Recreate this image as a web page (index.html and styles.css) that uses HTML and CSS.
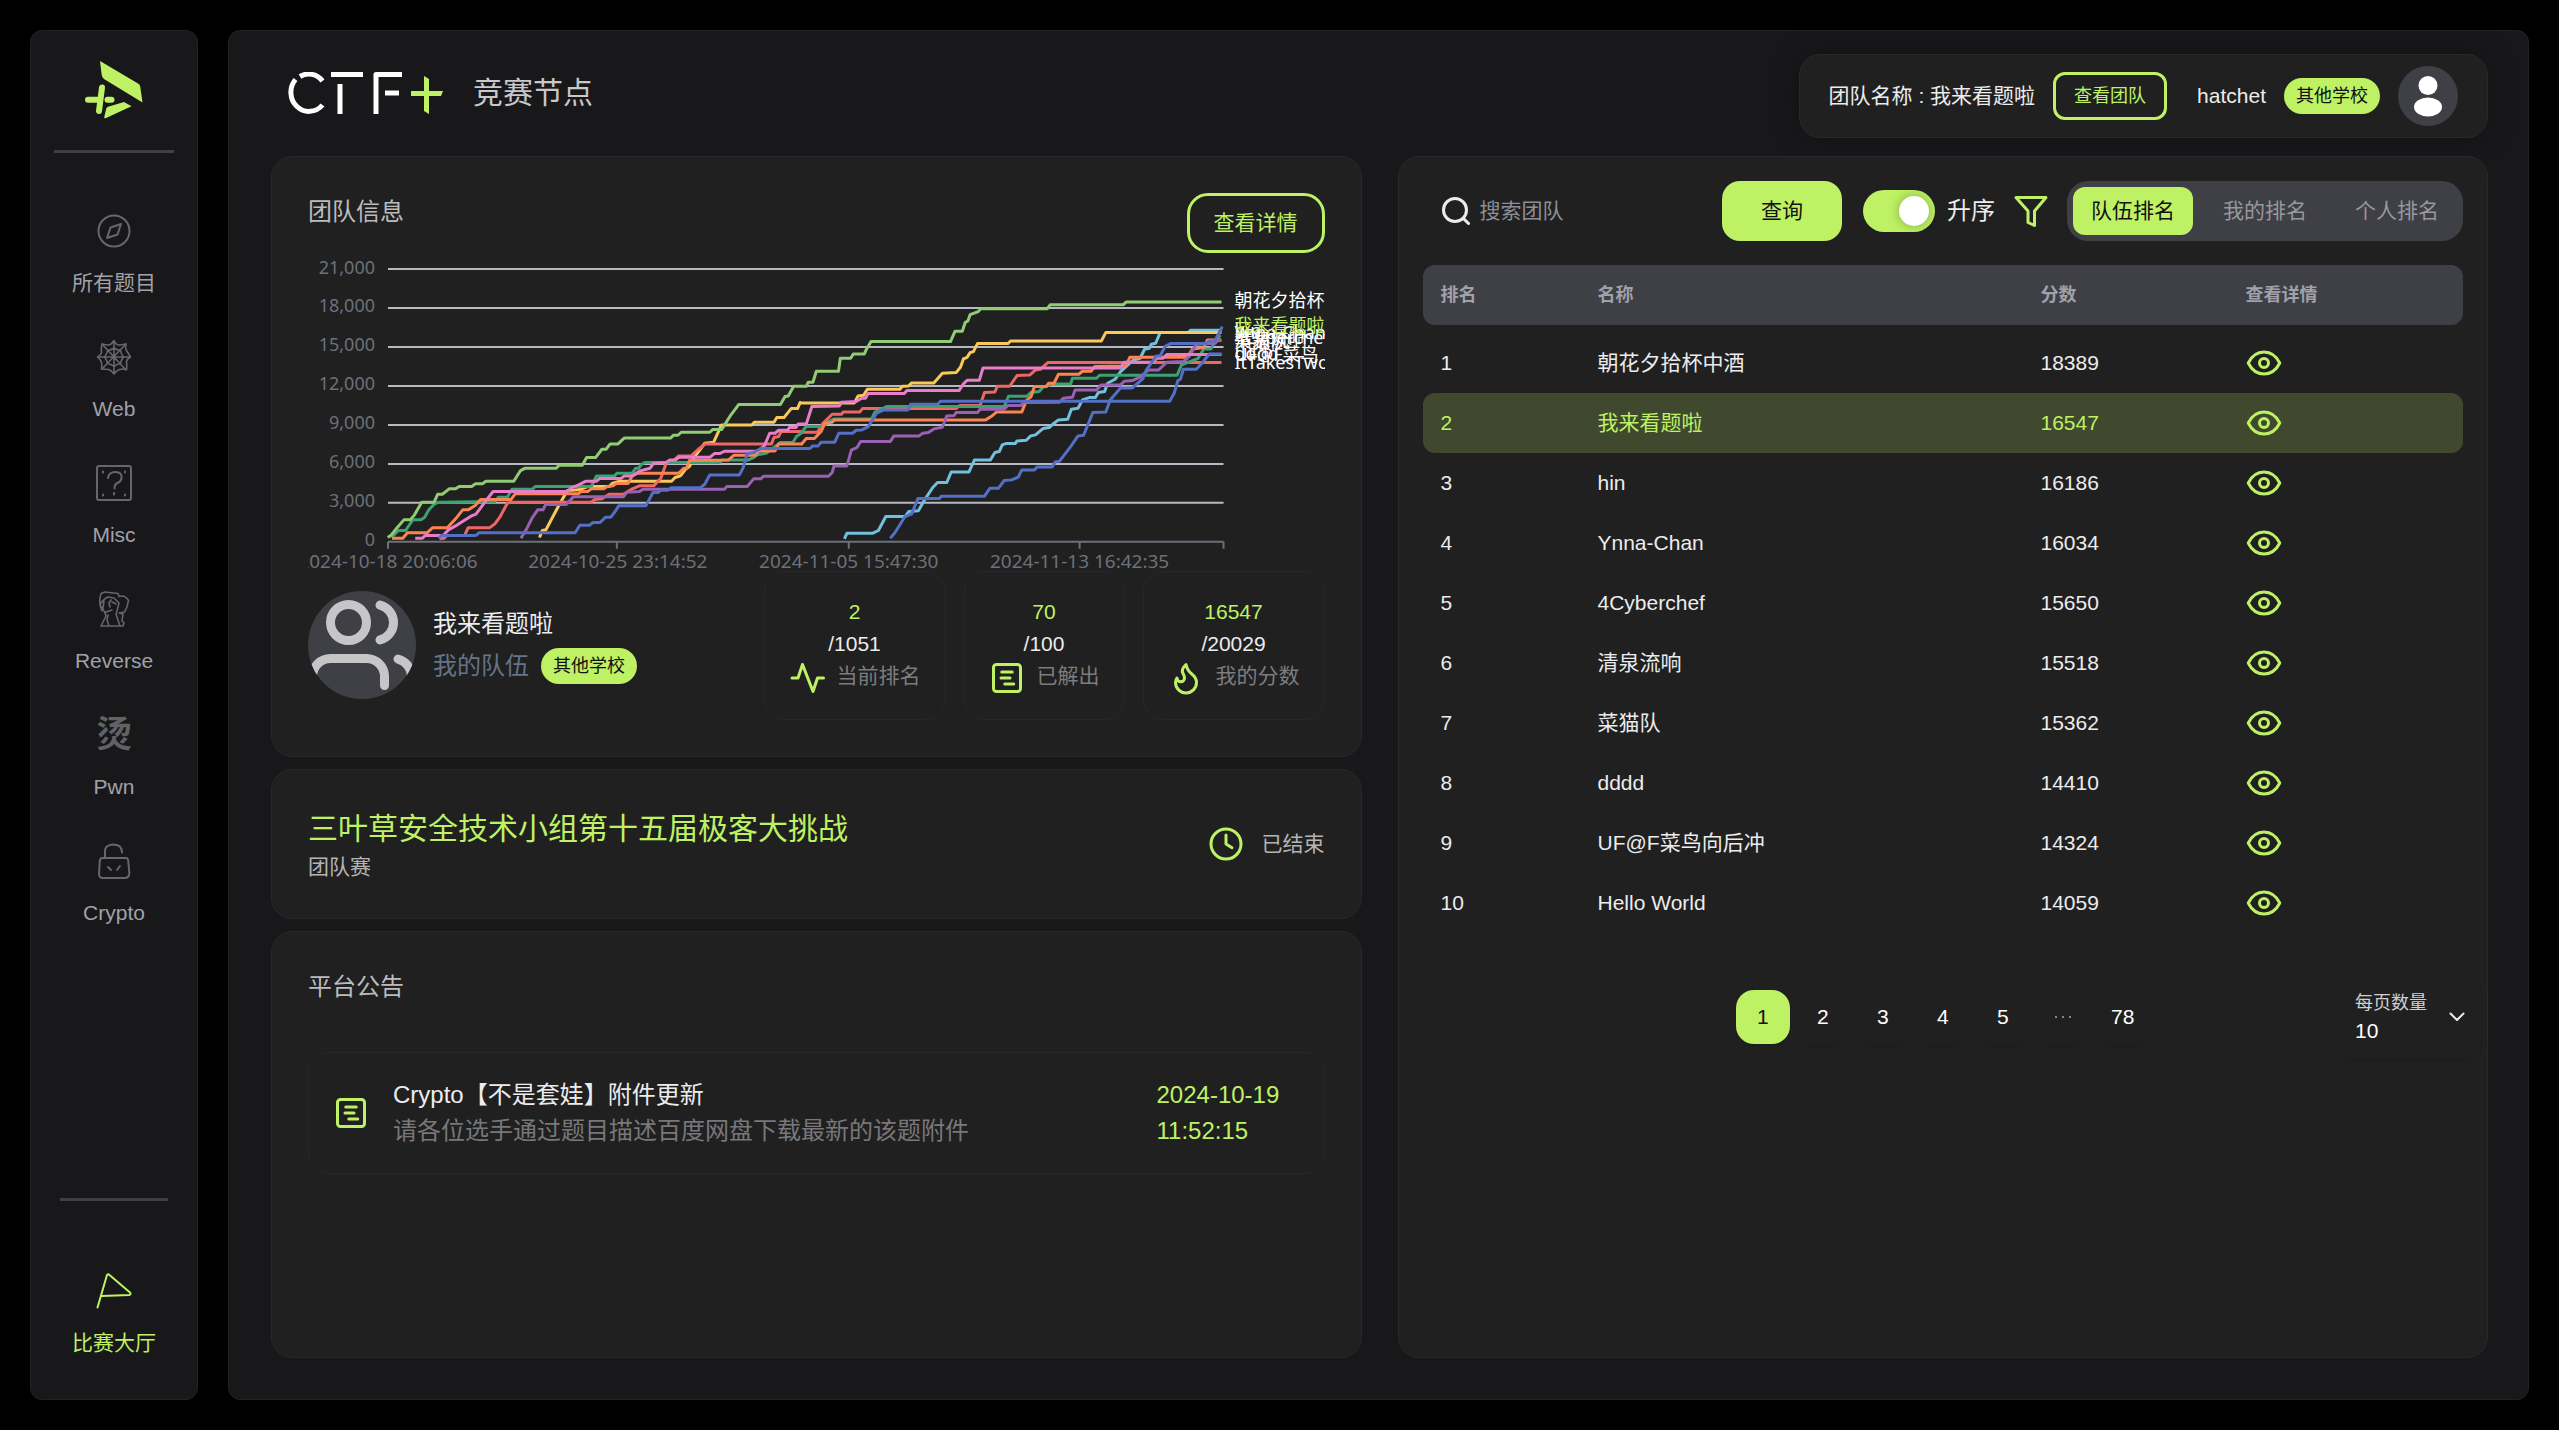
FILE: index.html
```html
<!DOCTYPE html>
<html lang="zh-CN">
<head>
<meta charset="utf-8">
<meta name="viewport" content="width=device-width, initial-scale=1">
<title>CTF+ 竞赛节点</title>
<link rel="stylesheet" href="styles.css">
</head>
<body>
<svg class="sprite" aria-hidden="true">
  <symbol id="i-eye" viewBox="0 0 24 24"><path d="M1.500 12C4 7 7.500 4.700 12 4.700S20 7 22.500 12C20 17 16.500 19.300 12 19.300S4 17 1.500 12z"/><circle cx="12" cy="12" r="3"/></symbol>
  <symbol id="i-note" viewBox="0 0 24 24"><rect x="3" y="3" width="18" height="18" rx="2"/><path d="M8.500 8h7M8 12h6M10.500 16h6"/></symbol>
</svg>

<aside class="sidebar">
  <a class="brand" href="#" aria-label="CTF+">
    <svg width="58" height="58" viewBox="0 0 58 58"><path d="M15 0l38 22.500q2 1 2.200 3L57.500 41.500 19 18q-2-1.500-2.300-4z"/><path d="M39 41l7.500 4.300L20 57.500q-1-.5-.6-2l1.600-7q.4-2 2-2.800z"/><path d="M17 26.500L14 50M3 38.700h10M22.500 38.700h4" class="brand-plus"/></svg>
  </a>
  <hr class="rule">
  <nav class="nav">
    <a href="#"><svg class="icon" viewBox="0 0 36 36"><circle cx="18" cy="18" r="15.500"/><path d="M25 11l-3.500 10.500L11 25l3.500-10.500z"/></svg><span>所有题目</span></a>
    <a href="#"><svg class="icon thin" viewBox="0 0 36 36"><path d="M18 1.500q2 5 5.500 4.500t6.500-1q-1 4 .5 6.500t4 6.500q-4.500 2.500-4 5.500t0 7q-4-1-7 0t-5.500 4.500q-3-4-5.500-4.500t-7-.5q.5-4 0-6.500T1.500 18Q6 15 5.500 12.500T6 5q4 1 6.500 1T18 1.500z"/><path d="M18 9q3 2 6.500 2.500Q25 15 27.500 18 25 21 24.500 24.500 21 25 18 27.500 15 25 11.500 24.500 11 21 8.500 18 11 15 11.500 11.500 15 11 18 9zM18 2v32M2 18h32M6 5l24 26M30 5L6 30"/></svg><span>Web</span></a>
    <a href="#"><svg class="icon" viewBox="0 0 36 36"><rect x="1" y="1" width="34" height="34" rx="2"/><path d="M12 13q1-6 7-6t6.500 4q.5 5-4 7-3 1-3 5.500M18 28v1.500M7 6.500v1M29 6.500v1M7 29.500v1M29 29.500v1"/></svg><span>Misc</span></a>
    <a href="#"><svg class="icon thin" viewBox="0 0 36 36"><path d="M6 20Q2 12 5 2.500L9 1l13 1.500 1 3q6-2 9.500 4-1 7-4 11.500l-5 1M4 14q3-6 8-8l6 1 5 5-2 8-1 3 4 12M4 14l3 4 2 4 1 3-5 10h22l1-3-2-2 1-7-4-1M12 24l-1 5 2 6M8 10l-1 7M15 9l-2 3 1 4M16 11l4 2M10 21l6-2"/></svg><span>Reverse</span></a>
    <a href="#"><span class="glyph" aria-hidden="true">烫</span><span>Pwn</span></a>
    <a href="#"><svg class="icon" viewBox="0 0 36 36"><path d="M9 15V8q0-6 8-6.500 9 0 9 8M6 15h24q2 0 2.300 3l1 12q0 5-5 5H7q-4 0-4-4l.7-12Q4 15 6 15zM12 24l3 3M24 23l-3 4"/></svg><span>Crypto</span></a>
  </nav>
  <hr class="rule rule-short">
  <a class="hall" href="#"><svg class="icon" viewBox="0 0 36 36"><path d="M1.500 34.500L11 2q1-1.500 2.500 0L34 19.500q1.500 2-1 2.500L6 23"/></svg><span>比赛大厅</span></a>
</aside>

<main class="main">
  <header class="top">
    <div class="title">
      <svg width="156" height="42" viewBox="0 0 156 42" role="img" aria-label="CTF+"><g class="wordmark"><path d="M8.500 7.500A17.500 18.500 0 1 0 35.500 33"/><path d="M13 4.500A17.500 18.500 0 0 1 35.500 9"/><path d="M44 2.500h32M53 12v30M89 42V2.500h26M98 21h14"/></g><path class="wordmark-plus" d="M137 4l5 3v35l-5-3z"/><path class="wordmark-plus" d="M124 19h32l-2 5h-30z"/></svg>
      <h1>竞赛节点</h1>
    </div>
    <div class="user">
      <span>团队名称 : 我来看题啦</span>
      <button class="btn-line btn-small" type="button">查看团队</button>
      <span class="user-name">hatchet</span>
      <span class="chip">其他学校</span>
      <span class="face"><svg width="60" height="60" viewBox="0 0 60 60" role="img" aria-label="hatchet"><circle cx="30" cy="19.500" r="9.500"/><ellipse cx="30" cy="41" rx="14" ry="9.500"/></svg></span>
    </div>
  </header>

  <div class="columns">
    <div class="left">
      <section class="card">
        <div class="card-head">
          <h2>团队信息</h2>
          <button class="btn-line" type="button">查看详情</button>
        </div>
        <svg class="chart" viewBox="0 0 1017 318" role="img" aria-label="队伍分数走势">
          <path class="grid" d="M80 16h836M80 55h836M80 94h836M80 133h836M80 172h836M80 211h836M80 250h836"/>
          <path class="axis" d="M80 289h836M80 289v7M309 289v7M541 289v7M772 289v7M916 289v7"/>
          <g class="ylab">
            <text x="67" y="21">21,000</text><text x="67" y="59">18,000</text><text x="67" y="98">15,000</text><text x="67" y="137">12,000</text><text x="67" y="176">9,000</text><text x="67" y="215">6,000</text><text x="67" y="254">3,000</text><text x="67" y="293">0</text>
          </g>
          <g class="xlab">
            <text x="80" y="315">2024-10-18 20:06:06</text><text x="310" y="315">2024-10-25 23:14:52</text><text x="541" y="315">2024-11-05 15:47:30</text><text x="772" y="315">2024-11-13 16:42:35</text>
          </g>
          <!-- October to early November -->
          <g class="series" transform="translate(-47 -103) scale(.35714 .33333)">
            <polyline class="s-yellow" points="780,1163 788,1142 798,1140 830,1075 858,1022 890,1020 915,1010 975,1010 985,1000 1005,994 1150,994 1160,983 1175,978 1190,957 1200,950 1215,920 1243,880 1268,877 1290,825 1375,825 1382,817 1437,817 1445,803 1465,803 1485,776 1503,776 1510,758 1513,758"/>
            <polyline class="s-red" points="500,1167 513,1165 520,1157 570,1157 580,1134 640,1134 655,1122 670,1100 690,1060 700,1057 925,1057 935,1049 955,1047 975,1033 1015,1033 1040,1017 1060,1008 1100,1008 1120,985 1135,940 1158,930 1170,918 1205,918 1225,898 1245,882 1430,882 1437,863 1450,860 1457,845 1513,845"/>
            <polyline class="s-green" points="365,1163 385,1142 405,1142 425,1110 447,1110 458,1103 470,1080 485,1063 498,1057 655,1055 665,1042 690,1042 703,1018 760,1018 768,1010 925,1010 940,978 990,978 997,970 1040,970 1050,955 1058,955 1065,944 1075,938 1285,938 1292,930 1365,930 1380,923 1390,915 1415,910 1430,898 1455,878 1490,878 1500,860 1513,850"/>
            <polyline class="s-orange" points="367,1165 397,1165 410,1149 465,1149 480,1134 522,1134 545,1107 565,1080 580,1080 600,1067 615,1049 700,1049 712,1032 888,1032 897,1025 915,1025 925,1017 960,1017 970,1010 985,1008 995,1001 1028,1001 1040,978 1055,970 1170,970 1185,955 1192,955 1200,932 1310,930 1325,916 1385,916 1395,903 1440,903 1450,882 1513,882"/>
            <polyline class="s-purple" points="728,1165 745,1135 760,1103 775,1080 790,1080 797,1064 855,1064 875,1041 1015,1041 1025,1027 1060,1025 1070,1018 1298,1018 1305,1010 1362,1010 1380,987 1400,987 1408,979 1513,979"/>
            <polyline class="s-pink" points="432,1165 452,1165 460,1157 510,1157 525,1140 550,1125 590,1098 602,1093 625,1060 650,1025 858,1025 870,1013 890,1005 910,994 940,994 948,986 1008,986 1018,978 1040,978 1062,963 1090,955 1100,940 1135,938 1145,930 1160,930 1172,922 1258,922 1270,911 1285,911 1298,904 1390,904 1410,888 1425,850 1440,850 1450,841 1475,841 1480,833 1498,833 1505,822 1513,822"/>
            <polyline class="s-blue" points="498,1165 505,1157 602,1157 610,1149 880,1149 893,1126 920,1126 930,1118 950,1118 965,1102 980,1102 992,1085 1002,1068 1078,1068 1098,1028 1112,1028 1120,1021 1140,1021 1148,1014 1230,1014 1243,1003 1257,975 1340,975 1350,955 1362,912 1380,908 1400,896 1513,896"/>
            <polyline class="s-lime" points="355,1163 365,1155 380,1135 400,1110 418,1110 430,1095 450,1057 485,1057 495,1033 508,1033 527,1017 545,1017 555,1010 590,1010 600,1002 620,1002 630,994 708,994 727,962 740,955 827,955 835,946 900,946 912,923 937,923 955,898 967,898 978,882 1000,882 1018,864 1148,864 1155,856 1168,856 1177,847 1257,847 1265,839 1290,839 1300,823 1315,797 1338,764 1455,764 1468,740 1477,738 1492,709 1513,709"/>
          </g>
          <!-- Early November to the close -->
          <g class="series" transform="translate(493 -103) scale(.3699 .33333)">
            <polyline class="s-sky" points="118,1167 125,1150 195,1150 210,1142 230,1100 282,1100 292,1085 318,1083 335,1050 357,1013 370,998 395,998 407,966 455,966 470,930 513,930 525,908 537,905 545,885 555,881 580,881 585,873 610,871 622,858 635,855 655,836 672,833 685,820 697,810 722,808 732,778 750,775 762,750 780,743 797,743 805,728 822,725 830,700 850,688 865,665 900,630 918,625 930,598 943,595 948,583 960,580 972,548 1047,548 1055,541 1138,541"/>
            <polyline class="s-yellow" points="0,759 145,759 155,738 170,736 180,718 268,718 275,709 292,708 300,699 360,699 383,670 420,668 432,652 440,627 450,622 458,608 467,605 478,581 560,581 568,573 813,573 825,548 1138,548"/>
            <polyline class="s-red" points="0,847 45,847 60,820 85,793 110,793 115,786 160,786 167,776 420,776 430,767 485,767 497,728 525,726 532,709 565,709 585,677 620,675 635,660 648,658 668,638 1138,638"/>
            <polyline class="s-green" points="0,850 15,830 60,830 75,815 90,807 192,807 200,787 232,770 550,770 562,739 612,739 622,728 645,725 655,712 680,702 730,702 735,685 800,685 808,676 1018,676 1030,645 1075,625 1090,597 1110,597 1120,575 1135,555"/>
            <polyline class="s-orange" points="0,885 15,866 37,866 55,845 65,820 85,817 92,810 500,810 515,800 530,786 598,786 610,752 623,740 632,710 665,710 670,700 685,700 697,673 752,673 762,664 785,664 795,650 880,648 890,622 1045,622 1060,597 1090,593 1100,570 1138,570"/>
            <polyline class="s-purple" points="0,979 75,979 85,968 90,948 125,948 137,900 152,893 162,875 242,875 252,858 320,858 330,850 345,848 360,837 383,832 395,798 415,797 420,788 478,788 485,778 550,778 560,767 595,767 603,758 700,757 710,745 735,742 742,720 800,720 812,705 865,705 875,694 897,692 920,680 940,660 968,660 990,637 1035,635 1050,620 1070,583 1120,580 1128,572 1138,572"/>
            <polyline class="s-pink" points="0,822 15,822 30,770 105,768 110,757 150,755 165,745 175,745 182,731 280,731 287,722 428,722 440,702 450,691 483,691 493,654 865,654 875,637 955,637 962,625 980,625 990,614 1138,614"/>
            <polyline class="s-blue" points="0,896 25,896 32,888 47,888 55,877 92,877 103,850 140,850 150,841 165,840 183,830 205,790 225,780 290,780 297,763 370,763 378,754 998,754 1010,730 1020,692 1027,688 1035,658 1070,658 1085,640 1105,612 1138,612"/>
            <polyline class="s-lime" points="0,709 15,709 20,697 33,697 42,664 102,664 107,625 135,625 142,612 172,612 178,597 190,575 405,575 417,544 437,544 445,517 452,513 458,494 480,485 487,476 667,476 675,464 873,464 880,456 1138,456"/>
            <polyline class="s-blue" points="242,1165 255,1148 282,1100 300,1092 317,1046 375,1046 380,1039 497,1039 512,1015 535,1015 550,992 570,990 588,982 598,960 632,960 640,951 680,951 688,936 700,934 730,890 750,858 765,856 790,788 825,786 837,750 865,714 897,714 925,687 935,660 962,618 972,618 985,590 1000,581 1095,581 1105,573 1120,573 1140,530"/>
          </g>
          <g class="ends">
            <text x="927" y="54">朝花夕拾杯</text><text x="927" y="84">hin</text><text x="927" y="86">Ynna-Chan</text><text x="927" y="91">4Cyberchef</text><text x="927" y="93">清泉流响</text><text x="927" y="95">菜猫队</text><text x="927" y="107">dddd</text><text x="927" y="108">UF@F菜鸟</text><text x="927" y="116">ItTakesTwo</text><text class="ours" x="927" y="79">我来看题啦</text>
          </g>
        </svg>
        <div class="team">
          <span class="team-face"><svg width="108" height="108" viewBox="0 0 24 24"><path d="M17 21v-2a4 4 0 0 0-4-4H5a4 4 0 0 0-4 4v2"/><circle cx="9" cy="7" r="4"/><path d="M23 21v-2a4 4 0 0 0-3-3.870M16 3.130a4 4 0 0 1 0 7.750"/></svg></span>
          <div class="team-text">
            <strong>我来看题啦</strong>
            <div class="team-line"><span>我的队伍</span><span class="chip">其他学校</span></div>
          </div>
          <dl class="stats">
            <div class="stat"><dd class="hit">2</dd><dd>/1051</dd><dt><svg class="icon-s" viewBox="0 0 24 24"><path d="M23 12h-4l-3 9L9 3l-3 9H2"/></svg>当前排名</dt></div>
            <div class="stat"><dd class="hit">70</dd><dd>/100</dd><dt><svg class="icon-s"><use href="#i-note"/></svg>已解出</dt></div>
            <div class="stat"><dd class="hit">16547</dd><dd>/20029</dd><dt><svg class="icon-s" viewBox="0 0 24 24"><path d="M8.500 14.500A2.500 2.500 0 0 0 11 12c0-1.400-.5-2-1-3-1.100-2.100-.2-4 2-6 .5 2.500 2 4.900 4 6.500s3 3.500 3 5.500a7 7 0 1 1-14 0c0-1.200.4-2.300 1-3a2.500 2.500 0 0 0 2.500 2.500z"/></svg>我的分数</dt></div>
          </dl>
        </div>
      </section>

      <section class="card event">
        <div>
          <h2 class="event-name">三叶草安全技术小组第十五届极客大挑战</h2>
          <p>团队赛</p>
        </div>
        <div class="event-state"><svg class="icon-s" viewBox="0 0 24 24"><circle cx="12" cy="12" r="10"/><path d="M12 6v6l4 2.500"/></svg><span>已结束</span></div>
      </section>

      <section class="card notices">
        <h2>平台公告</h2>
        <article class="notice">
          <svg class="icon-s"><use href="#i-note"/></svg>
          <div class="notice-text"><h3>Crypto【不是套娃】附件更新</h3><p>请各位选手通过题目描述百度网盘下载最新的该题附件</p></div>
          <time datetime="2024-10-19T11:52:15">2024-10-19 11:52:15</time>
        </article>
      </section>
    </div>

    <section class="card right">
      <form class="tools">
        <label class="search"><svg width="28" height="28" viewBox="0 0 28 28"><circle cx="13" cy="13" r="11.500"/><path d="M21.500 21.500l5 5"/></svg><input type="search" placeholder="搜索团队" aria-label="搜索团队"></label>
        <button class="btn-solid" type="button">查询</button>
        <label class="switch"><input type="checkbox" role="switch" checked><span>升序</span></label>
        <svg class="filter" width="36" height="36" viewBox="0 0 36 36"><path d="M3 4.500h30L21.500 18v14.500L15 29.500V18z"/></svg>
        <div class="tabs" role="tablist">
          <button type="button" role="tab" aria-selected="true">队伍排名</button>
          <button type="button" role="tab" aria-selected="false">我的排名</button>
          <button type="button" role="tab" aria-selected="false">个人排名</button>
        </div>
      </form>

      <table class="ranks">
        <colgroup><col class="c-rank"><col class="c-name"><col class="c-score"><col class="c-view"></colgroup>
        <thead><tr><th>排名</th><th>名称</th><th>分数</th><th>查看详情</th></tr></thead>
        <tbody>
          <tr class="space"><td colspan="4"></td></tr>
          <tr><td>1</td><td>朝花夕拾杯中酒</td><td>18389</td><td><a href="#" aria-label="查看"><svg class="icon-s"><use href="#i-eye"/></svg></a></td></tr>
          <tr class="mine"><td>2</td><td>我来看题啦</td><td>16547</td><td><a href="#" aria-label="查看"><svg class="icon-s"><use href="#i-eye"/></svg></a></td></tr>
          <tr><td>3</td><td>hin</td><td>16186</td><td><a href="#" aria-label="查看"><svg class="icon-s"><use href="#i-eye"/></svg></a></td></tr>
          <tr><td>4</td><td>Ynna-Chan</td><td>16034</td><td><a href="#" aria-label="查看"><svg class="icon-s"><use href="#i-eye"/></svg></a></td></tr>
          <tr><td>5</td><td>4Cyberchef</td><td>15650</td><td><a href="#" aria-label="查看"><svg class="icon-s"><use href="#i-eye"/></svg></a></td></tr>
          <tr><td>6</td><td>清泉流响</td><td>15518</td><td><a href="#" aria-label="查看"><svg class="icon-s"><use href="#i-eye"/></svg></a></td></tr>
          <tr><td>7</td><td>菜猫队</td><td>15362</td><td><a href="#" aria-label="查看"><svg class="icon-s"><use href="#i-eye"/></svg></a></td></tr>
          <tr><td>8</td><td>dddd</td><td>14410</td><td><a href="#" aria-label="查看"><svg class="icon-s"><use href="#i-eye"/></svg></a></td></tr>
          <tr><td>9</td><td>UF@F菜鸟向后冲</td><td>14324</td><td><a href="#" aria-label="查看"><svg class="icon-s"><use href="#i-eye"/></svg></a></td></tr>
          <tr><td>10</td><td>Hello World</td><td>14059</td><td><a href="#" aria-label="查看"><svg class="icon-s"><use href="#i-eye"/></svg></a></td></tr>
        </tbody>
      </table>

      <div class="foot">
        <nav class="pager" aria-label="分页">
          <button type="button" aria-current="page">1</button><button type="button">2</button><button type="button">3</button><button type="button">4</button><button type="button">5</button><button type="button" aria-label="更多"><svg width="18" height="6" viewBox="0 0 18 6"><circle cx="2" cy="3" r="1"/><circle cx="9" cy="3" r="1"/><circle cx="16" cy="3" r="1"/></svg></button><button type="button">78</button>
        </nav>
        <div class="size">
          <div class="size-text">
            <label for="size">每页数量</label>
            <select id="size"><option>10</option><option>20</option><option>50</option></select>
          </div>
          <svg width="16" height="10" viewBox="0 0 16 10"><path d="M1.500 1.500L8 8l6.500-6.500"/></svg>
        </div>
      </div>
    </section>
  </div>
</main>
</body>
</html>
```
FILE: styles.css
```css
:root {
  --lime: #bef264;
  --panel: #18181b;
  --card: #202020;
  --edge: #28282a;
  --zinc: #3f3f46;
}

* { box-sizing: border-box; margin: 0; }

body {
  display: flex;
  gap: 30px;
  min-height: 100vh;
  padding: 30px;
  background: #000;
  color: #ececee;
  font: 21px/32px "Liberation Sans", "Noto Sans CJK SC", sans-serif;
}

h1, h2, h3, strong { font-weight: 400; }
a { color: inherit; text-decoration: none; }
svg { display: block; flex: none; fill: none; stroke: currentColor; stroke-linecap: round; stroke-linejoin: round; }
button, input, select { font: inherit; color: inherit; border: 0; background: none; padding: 0; }
.sprite { display: none; }

/* Sidebar */
.sidebar {
  flex: none;
  display: flex;
  flex-direction: column;
  align-items: center;
  width: 168px;
  padding: 30px 0 40px;
  border: 1px solid #222224;
  border-radius: 12px;
  background: var(--panel);
}
.brand svg { fill: var(--lime); stroke: none; }
.brand .brand-plus { fill: none; stroke: var(--lime); stroke-width: 6; }
.rule { width: 120px; height: 3px; margin-top: 31px; border: 0; background: var(--zinc); }
.rule-short { width: 108px; margin-top: auto; }
.nav { display: flex; flex-direction: column; gap: 22px; margin-top: 60px; }
.nav a, .hall { display: flex; flex-direction: column; align-items: center; gap: 18px; height: 104px; color: #a1a1aa; }
.icon { width: 36px; height: 36px; stroke-width: 2; color: #67676a; }
.icon.thin { stroke-width: 1.6; }
.glyph { height: 36px; font-size: 36px; font-weight: 700; line-height: 36px; color: #626264; }
.hall { height: auto; margin-top: 72px; color: var(--lime); }
.hall .icon { color: var(--lime); }

/* Page header */
.main {
  flex: 1;
  display: flex;
  flex-direction: column;
  min-width: 0;
  padding: 23px 40px 41px 42px;
  border: 1px solid #222224;
  border-radius: 12px;
  background: var(--panel);
}
.top { display: flex; justify-content: space-between; align-items: center; margin-bottom: 18px; }
.title { display: flex; align-items: center; gap: 30px; padding-left: 16px; margin-bottom: 6px; }
.title h1 { font-size: 30px; line-height: 42px; color: #c8c8ca; }
.wordmark { stroke: #fff; stroke-width: 5; stroke-linecap: butt; }
.wordmark-plus { fill: var(--lime); stroke: none; }
.user {
  display: flex;
  align-items: center;
  gap: 18px;
  height: 84px;
  padding: 0 29px;
  border: 1px solid var(--edge);
  border-radius: 21px;
  background: var(--card);
  box-shadow: 0 0 30px rgba(0, 0, 0, .25);
}
.user-name { margin-left: 12px; }
.face { border-radius: 50%; background: var(--zinc); }
.face svg { fill: #fff; stroke: none; }
.chip { padding: 0 12px; border-radius: 18px; background: var(--lime); color: #111; font-size: 18px; line-height: 36px; }
.btn-line { height: 60px; padding: 0 24px; border: 3px solid var(--lime); border-radius: 21px; color: var(--lime); }
.btn-small { height: 48px; padding: 0 18px; border-radius: 12px; font-size: 18px; }
.btn-solid { width: 120px; height: 60px; border-radius: 18px; background: var(--lime); color: #111; }

/* Cards */
.columns { flex: 1; display: grid; grid-template-columns: 1fr 1fr; gap: 36px; }
.left { display: flex; flex-direction: column; gap: 12px; min-width: 0; }
.card { padding: 36px; border: 1px solid var(--edge); border-radius: 21px; background: var(--card); }
.card h2 { font-size: 24px; line-height: 38px; color: #bcbcbe; }
.card-head { display: flex; justify-content: space-between; align-items: flex-start; }

.chart { width: 100%; height: auto; overflow: hidden; font-family: "Noto Sans", "Noto Sans CJK SC", sans-serif; font-size: 18px; }
.chart text { stroke: none; }
.grid { stroke: #b4b9c2; stroke-width: 2; stroke-linecap: butt; }
.axis { stroke: #6e7079; stroke-width: 2; stroke-linecap: butt; }
.ylab { fill: #6e7079; text-anchor: end; }
.xlab { fill: #6e7079; text-anchor: middle; font-size: 19px; }
.ends { fill: #fff; }
.ours { fill: var(--lime); }
.series polyline { stroke-width: 3; vector-effect: non-scaling-stroke; stroke-linecap: butt; }
.s-blue { stroke: #5470c6; }
.s-lime { stroke: #91cc75; }
.s-yellow { stroke: #fac858; }
.s-red { stroke: #ee6666; }
.s-sky { stroke: #73c0de; }
.s-green { stroke: #3ba272; }
.s-orange { stroke: #fc8452; }
.s-purple { stroke: #9a60b4; }
.s-pink { stroke: #ea7ccc; }

.team { display: flex; align-items: center; gap: 17px; }
.team-face { overflow: hidden; border-radius: 50%; background: var(--zinc); color: #c6c6c8; }
.team-face svg { stroke-width: 2; }
.team-text { display: flex; flex-direction: column; gap: 6px; font-size: 24px; line-height: 36px; }
.team-line { display: flex; gap: 12px; color: #64748b; }
.stats { display: flex; gap: 18px; margin-left: auto; }
.stat { display: flex; flex-direction: column; align-items: center; padding: 24px 24px 23px; border: 1px solid #272728; border-radius: 21px; }
.stat dt { display: flex; gap: 12px; color: #7c7c7e; }
.hit, .icon-s { color: var(--lime); }
.icon-s { width: 36px; height: 36px; stroke-width: 2; }

.event { display: flex; justify-content: space-between; align-items: center; }
.event .event-name { font-size: 30px; line-height: 46px; color: var(--lime); }
.event p { line-height: 30px; color: #b4b4b6; }
.event-state { display: flex; align-items: center; gap: 18px; color: #b4b4b6; }

.notices { flex: 1; }
.notice {
  display: flex;
  align-items: center;
  gap: 24px;
  margin-top: 46px;
  padding: 24px;
  border: 1px solid #272728;
  border-radius: 21px;
  font-size: 24px;
  line-height: 36px;
}
.notice-text { flex: 1; }
.notice h3 { font-size: 24px; }
.notice p { color: #78787a; }
.notice time { width: 143px; color: var(--lime); }

/* Ranking */
.right { min-width: 0; padding: 24px; }
.tools { display: flex; align-items: center; }
.search { flex: 1; display: flex; align-items: center; gap: 10px; min-width: 0; height: 60px; padding-left: 19px; }
.search svg { stroke-width: 3; }
.search input { flex: 1; min-width: 0; outline: 0; }
.search input::placeholder { color: #8e8e95; opacity: 1; }
.switch { display: flex; align-items: center; gap: 12px; margin-left: 21px; font-size: 24px; }
.switch input { appearance: none; display: flex; align-items: center; justify-content: flex-end; width: 72px; height: 42px; padding: 6px; border-radius: 21px; background: var(--lime); }
.switch input::before { content: ""; width: 30px; height: 30px; border-radius: 50%; background: #fff; box-shadow: 0 0 12px rgba(0, 0, 0, .3); }
.filter { margin: 0 18px; color: var(--lime); stroke-width: 3; }
.tabs { display: flex; gap: 12px; padding: 6px; border-radius: 21px; background: var(--zinc); color: #97979f; }
.tabs button { width: 120px; height: 48px; border-radius: 12px; }
.tabs [aria-selected="true"] { background: var(--lime); color: #111; }

.ranks { width: 100%; margin-top: 24px; border-spacing: 0; table-layout: fixed; text-align: left; }
.c-rank { width: 157px; }
.c-name { width: 443px; }
.c-score { width: 205px; }
.ranks th, .ranks td { height: 60px; padding: 0 18px; }
.ranks th { background: var(--zinc); color: #a1a1aa; font-size: 18px; }
.ranks .space td { height: 8px; padding: 0; line-height: 8px; }
.ranks th:first-child, .ranks td:first-child { border-radius: 12px 0 0 12px; }
.ranks th:last-child, .ranks td:last-child { border-radius: 0 12px 12px 0; }
.mine td { background: #40492e; color: var(--lime); }

.foot { display: grid; grid-template-columns: 1fr auto 1fr; align-items: center; margin: 42px -18px 0; }
.pager { grid-column: 2; display: flex; gap: 6px; color: #fff; }
.pager button { display: grid; place-items: center; width: 54px; height: 54px; border-radius: 18px; box-shadow: 0 2px 3px rgba(0, 0, 0, .08); }
.pager svg { fill: #aaa; stroke: none; }
.pager [aria-current] { background: var(--lime); color: #111; }
.size { justify-self: end; display: flex; align-items: center; justify-content: space-between; width: 144px; height: 84px; padding: 0 16px 0 18px; border-radius: 18px; box-shadow: 0 2px 3px rgba(0, 0, 0, .08); }
.size-text { display: flex; flex-direction: column; }
.size label { font-size: 18px; line-height: 28px; color: #d0d0d2; }
.size select { appearance: none; width: 72px; height: 28px; line-height: 28px; color: #fff; }
.size svg { stroke-width: 2; }
```
